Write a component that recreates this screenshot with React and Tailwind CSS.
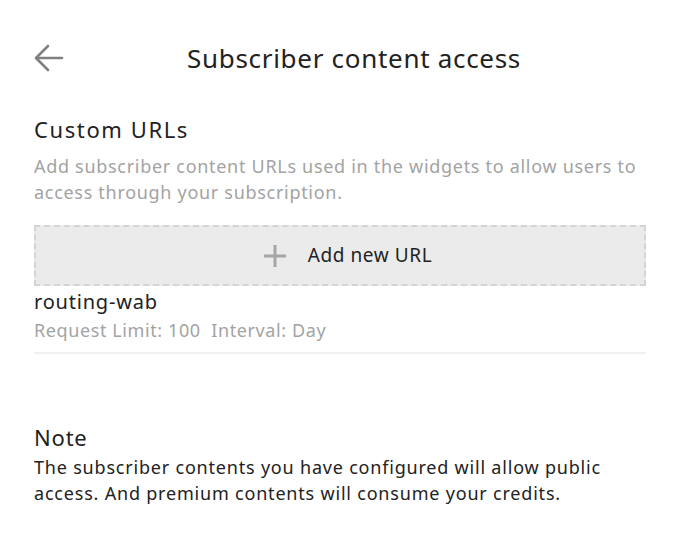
export default function App() {
  return (
    <div className="w-[678px] h-[556px] overflow-hidden bg-white pl-[34px] pr-[32px] pt-[38px] text-[#222]" style={{ fontFamily: '"Noto Sans", sans-serif' }}>
      <div className="relative flex items-center justify-center h-[40px]">
        <svg className="absolute left-0 top-[6px]" width="30" height="28" viewBox="0 0 30 28" fill="none" stroke="#808080" strokeWidth="2.6" strokeLinecap="round" strokeLinejoin="round">
          <path d="M28 14H3" />
          <path d="M14 2L2 14l12 12" />
        </svg>
        <h1 className="ml-[28px] text-[26px] leading-[40px] tracking-[0.7px] text-[#222]">Subscriber content access</h1>
      </div>
      <h2 className="mt-[36px] text-[22px] leading-[30px] tracking-[1.6px] text-[#222]">Custom URLs</h2>
      <p className="mt-[9px] text-[18px] leading-[26px] tracking-[0.7px] text-[#a3a3a3]">
        Add subscriber content URLs used in the widgets to allow users to access through your subscription.
      </p>
      <button className="mt-[20px] w-full h-[61px] pl-[16px] flex items-center justify-center gap-[22px] bg-[#ebebeb] border-2 border-dashed border-[#d4d4d4]">
        <svg width="22" height="22" viewBox="0 0 22 22" stroke="#a6a6a6" strokeWidth="3">
          <path d="M11 0v22M0 11h22" />
        </svg>
        <span className="text-[19px] tracking-[0.6px] text-[#222]">Add new URL</span>
      </button>
      <div className="pt-[2px] pb-[8px] border-b-2 border-[#f0f0f0]">
        <div className="text-[20px] leading-[28px] tracking-[0.8px] text-[#222]">routing-wab</div>
        <div className="text-[18px] leading-[28px] tracking-[0.6px] text-[#a3a3a3]">Request Limit: 100&nbsp;&nbsp;Interval: Day</div>
      </div>
      <h2 className="mt-[68px] text-[22px] leading-[30px] tracking-[0.8px] text-[#222]">Note</h2>
      <p className="mt-[2px] text-[18px] leading-[26px] tracking-[0.8px] text-[#222]">
        The subscriber contents you have configured will allow public access. And premium contents will consume your credits.
      </p>
    </div>
  );
}
